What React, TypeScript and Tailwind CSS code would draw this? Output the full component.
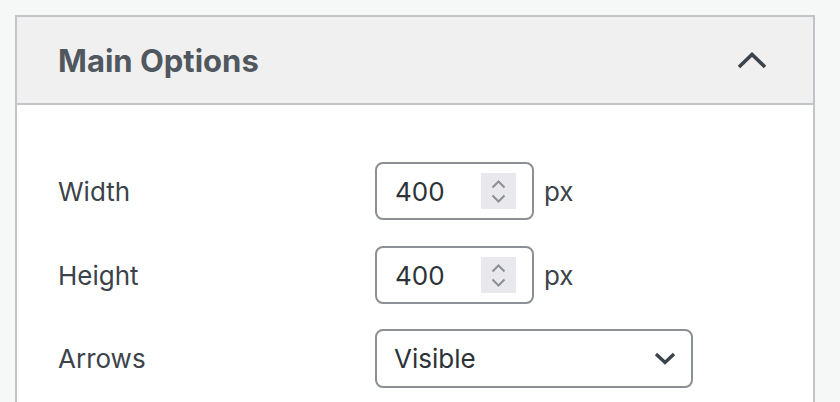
import React from "react";

const font = { fontFamily: "Inter, 'Noto Sans', 'Liberation Sans', sans-serif" };

function Spinner() {
  return (
    <div className="flex h-[36px] w-[35px] flex-col items-center justify-center gap-[5px] bg-[#e9e9ed]">
      <svg width="15" height="9" viewBox="0 0 15 9" fill="none">
        <path d="M1.5 7.5 L7.5 1.5 L13.5 7.5" stroke="#8c8f94" strokeWidth="2" />
      </svg>
      <svg width="15" height="9" viewBox="0 0 15 9" fill="none">
        <path d="M1.5 1.5 L7.5 7.5 L13.5 1.5" stroke="#8c8f94" strokeWidth="2" />
      </svg>
    </div>
  );
}

function NumberRow({ label, value }: { label: string; value: string }) {
  return (
    <div className="flex h-[58px] items-center">
      <div className="w-[317px] text-[26px] text-[#3c434a]">{label}</div>
      <div className="flex h-[58px] w-[159px] items-center justify-between rounded-[8px] border-2 border-[#8c8f94] bg-white pl-[18px] pr-[16px]">
        <span className="text-[26px] text-[#2c3338]">{value}</span>
        <Spinner />
      </div>
      <span className="ml-[10px] text-[26px] text-[#3c434a]">px</span>
    </div>
  );
}

export default function App() {
  return (
    <div className="h-[402px] w-[840px] overflow-hidden bg-[#f6f7f7] pl-[15px] pt-[15px]" style={font}>
      <div className="h-[420px] w-[800px] border-2 border-[#c3c4c7] bg-white">
        <div className="flex h-[88px] items-center justify-between border-b-2 border-[#c3c4c7] bg-[#f0f0f1] pl-[41px] pr-[46px]">
          <h2 className="pt-[2px] text-[31px] font-bold text-[#50575e]">Main Options</h2>
          <svg width="30" height="17" viewBox="0 0 30 17" fill="none">
            <path d="M2 15 L15 2.5 L28 15" stroke="#3c434a" strokeWidth="3.6" />
          </svg>
        </div>
        <div className="flex flex-col gap-[26px] pl-[41px] pt-[57px]">
          <NumberRow label="Width" value="400" />
          <NumberRow label="Height" value="400" />
          <div className="-mt-[1px] flex h-[59px] items-center">
            <div className="w-[317px] text-[26px] text-[#3c434a]">Arrows</div>
            <div className="flex h-[59px] w-[318px] items-center justify-between rounded-[8px] border-2 border-[#8c8f94] bg-white pl-[17px] pr-[15px]">
              <span className="text-[26px] text-[#2c3338]">Visible</span>
              <svg width="22" height="13" viewBox="0 0 22 13" fill="none">
                <path d="M2 2 L11 10.5 L20 2" stroke="#3c434a" strokeWidth="3.4" />
              </svg>
            </div>
          </div>
        </div>
      </div>
    </div>
  );
}
